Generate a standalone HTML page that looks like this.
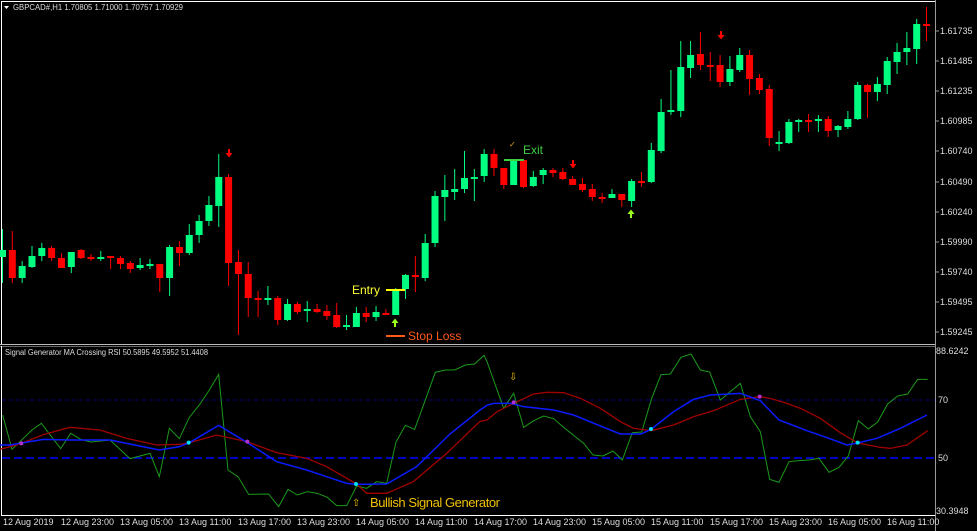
<!DOCTYPE html>
<html><head><meta charset="utf-8"><style>
html,body{margin:0;padding:0;background:#000;width:977px;height:531px;overflow:hidden}
svg{display:block}
text{font-family:"Liberation Sans",sans-serif}
</style></head><body>
<svg id="s" width="977" height="531" viewBox="0 0 977 531" xmlns="http://www.w3.org/2000/svg">
<rect width="977" height="531" fill="#000"/>
<line x1="1" y1="1.5" x2="935" y2="1.5" stroke="#fff" stroke-width="1"/>
<line x1="1.5" y1="1" x2="1.5" y2="344" stroke="#fff" stroke-width="1"/>
<line x1="935.5" y1="0" x2="935.5" y2="531" stroke="#9a9a9a" stroke-width="1"/>
<line x1="0" y1="344.5" x2="935" y2="344.5" stroke="#bbb" stroke-width="1"/>
<line x1="0" y1="346.5" x2="935" y2="346.5" stroke="#666" stroke-width="1"/>
<line x1="1.5" y1="346" x2="1.5" y2="515" stroke="#fff" stroke-width="1"/>
<line x1="1" y1="515.5" x2="935" y2="515.5" stroke="#fff" stroke-width="1"/>
<g id="cd"></g>
<g id="ind"></g>
<path d="M4 6 L9 6 L6.5 9 Z" fill="#fff"/>
<text x="13" y="10" font-size="8" fill="#ddd" textLength="170" lengthAdjust="spacingAndGlyphs">GBPCAD#,H1  1.70805 1.71000 1.70757 1.70929</text>
<g font-size="9" fill="#ddd">
<text x="940" y="34">1.61735</text>
<text x="940" y="64">1.61485</text>
<text x="940" y="94">1.61235</text>
<text x="940" y="124">1.60985</text>
<text x="940" y="154">1.60740</text>
<text x="940" y="185">1.60490</text>
<text x="940" y="215">1.60240</text>
<text x="940" y="245">1.59990</text>
<text x="940" y="275">1.59740</text>
<text x="940" y="305">1.59495</text>
<text x="940" y="335">1.59245</text>
<text x="936" y="354">88.6242</text>
<text x="938" y="403">70</text>
<text x="938" y="461">50</text>
<text x="936" y="514">30.3948</text>
</g>
<g stroke="#9a9a9a">
<line x1="935" y1="31" x2="939" y2="31"/><line x1="935" y1="61" x2="939" y2="61"/><line x1="935" y1="91" x2="939" y2="91"/><line x1="935" y1="121" x2="939" y2="121"/><line x1="935" y1="151" x2="939" y2="151"/><line x1="935" y1="182" x2="939" y2="182"/><line x1="935" y1="212" x2="939" y2="212"/><line x1="935" y1="242" x2="939" y2="242"/><line x1="935" y1="272" x2="939" y2="272"/><line x1="935" y1="302" x2="939" y2="302"/><line x1="935" y1="332" x2="939" y2="332"/>
</g>
<line x1="386" y1="290" x2="405" y2="290" stroke="#ffff00" stroke-width="2"/>
<text x="352" y="294" font-size="12" fill="#ffff33">Entry</text>
<line x1="386" y1="336" x2="405" y2="336" stroke="#ff5a1a" stroke-width="2"/>
<text x="408" y="340" font-size="12" fill="#ff5a1a">Stop Loss</text>
<line x1="504" y1="160" x2="524" y2="160" stroke="#3fcf3f" stroke-width="2"/>
<text x="523" y="154" font-size="12" fill="#3fcf3f">Exit</text>
<text x="509" y="147" font-size="8" fill="#e0a020">✓</text>
<text x="5" y="355" font-size="8" fill="#ddd" textLength="203" lengthAdjust="spacingAndGlyphs">Signal Generator MA Crossing RSI 50.5895 49.5952 51.4408</text>
<text x="370" y="507" font-size="13" fill="#f0c000" textLength="130">Bullish Signal Generator</text>
<text x="352" y="506" font-size="10" fill="#f0c000">⇧</text>
<text x="509" y="380" font-size="10" fill="#f0c000">⇩</text>
<g font-size="9" fill="#ddd">
<text x="3" y="525">12 Aug 2019</text>
<text x="61" y="525">12 Aug 23:00</text>
<text x="120" y="525">13 Aug 05:00</text>
<text x="179" y="525">13 Aug 11:00</text>
<text x="238" y="525">13 Aug 17:00</text>
<text x="297" y="525">13 Aug 23:00</text>
<text x="356" y="525">14 Aug 05:00</text>
<text x="415" y="525">14 Aug 11:00</text>
<text x="474" y="525">14 Aug 17:00</text>
<text x="533" y="525">14 Aug 23:00</text>
<text x="592" y="525">15 Aug 05:00</text>
<text x="651" y="525">15 Aug 11:00</text>
<text x="710" y="525">15 Aug 17:00</text>
<text x="769" y="525">15 Aug 23:00</text>
<text x="828" y="525">16 Aug 05:00</text>
<text x="887" y="525">16 Aug 11:00</text>
</g>
</svg>
<script>
var NS="http://www.w3.org/2000/svg";
function el(p,t,a){var e=document.createElementNS(NS,t);for(var k in a)e.setAttribute(k,a[k]);p.appendChild(e);return e;}
var G="#00ff80",R="#ff0000";
var C=[
[G,250,257,229,283],[R,250,278,231,283],[G,266,278,261,283],[G,256,267,246,268],[G,248,256,243,261],
[R,248,258,246,261],[R,258,268,253,268],[G,252,267,252,273],[R,250,258,249,259],[R,257,259,254,261],
[G,257,259,251,261],[R,256,258,256,269],[R,258,264,256,269],[R,263,269,261,273],[G,265,268,258,270],
[G,264,266,259,269],[R,264,278,264,292],[G,247,278,245,296],[R,247,253,241,266],[G,235,253,224,255],
[G,221,235,215,243],[G,205,221,196,226],[G,177,206,154,227],[R,177,263,174,286],[R,262,274,250,335],
[R,274,298,262,317],[R,298,300,291,317],[G,298,300,286,305],[R,298,320,296,325],[G,304,320,299,321],
[R,304,312,302,314],[G,309,311,301,322],[R,309,312,304,313],[R,311,316,305,320],[R,315,327,303,328],
[G,325,327,315,330],[G,313,327,307,327],[R,313,317,307,322],[G,312,317,306,321],[R,313,315,309,315],
[G,290,315,288,315],[G,275,289,274,299],[R,275,277,256,292],[G,243,278,234,281],[G,196,243,191,247],
[G,190,197,175,221],[G,189,192,169,200],[G,178,189,151,193],[G,177,178,169,201],[G,154,176,149,182],
[R,154,168,149,176],[R,168,185,168,189],[G,160,185,160,185],[R,160,187,160,188],[G,177,186,171,187],
[G,170,175,168,184],[R,170,173,168,177],[R,172,179,168,180],[R,179,185,176,185],[R,184,190,178,192],
[R,189,197,184,201],[R,197,199,193,203],[G,194,198,189,198],[R,194,200,194,207],[G,181,201,179,207],
[R,181,182,172,187],[G,150,182,143,183],[G,112,151,99,153],[G,110,112,70,115],[G,67,111,41,117],
[G,55,68,41,78],[R,54,65,32,70],[R,65,66,52,81],[R,65,82,55,87],[G,69,82,56,86],
[G,55,70,48,72],[R,55,79,50,95],[R,78,90,74,94],[R,89,138,85,146],[G,142,144,131,151],
[G,122,143,119,144],[G,120,122,119,132],[R,120,121,114,132],[G,119,121,115,132],[R,119,131,116,137],
[G,126,130,125,137],[G,119,127,111,129],[G,85,119,82,120],[R,85,92,84,118],[G,84,92,77,101],
[G,61,85,57,94],[G,52,62,43,74],[G,48,52,32,65],[G,24,49,19,64],[R,24,25,7,41]
];
var cd=document.getElementById("cd");
C.forEach(function(c,k){var x=2.5+9.83*k;
 el(cd,"line",{x1:x,y1:c[3],x2:x,y2:c[4],stroke:c[0],"stroke-width":1});
 var h=Math.max(c[2]-c[1],2);
 el(cd,"rect",{x:x-3.5,y:c[1],width:7,height:h,fill:c[0]});
});
function arrowDown(x,y,col){el(cd,"path",{d:"M"+(x-1)+" "+y+"h2v4h2.5l-3.5 4.5l-3.5 -4.5h2.5z",fill:col});}
function arrowUp(x,y,col){el(cd,"path",{d:"M"+(x-1)+" "+(y+9)+"h2v-4h2.5l-3.5 -4.5l-3.5 4.5h2.5z",fill:col});}
arrowDown(229,149,R);arrowDown(573,160,R);arrowDown(721,31,R);
arrowUp(395,318,"#9aff1a");arrowUp(631,209,"#9aff1a");
var ind=document.getElementById("ind");
el(ind,"line",{x1:2,y1:400,x2:935,y2:400,stroke:"#00007a","stroke-width":1,"stroke-dasharray":"4,3"});
el(ind,"line",{x1:2,y1:458,x2:935,y2:458,stroke:"#0000ff","stroke-width":1.5,"stroke-dasharray":"8,4"});
function pts(a,b){var s=[];a.forEach(function(p){s.push((p[0]/3)+","+(340+p[1]/3));});b.forEach(function(p){s.push((487+p[0]/3)+","+(340+p[1]/3));});return s.join(" ");}
var g1=[[8,225],[36,328],[96,270],[124,250],[182,326],[212,280],[242,298],[272,306],[330,300],[390,356],[450,340],[478,410],[508,265],[538,296],[568,232],[598,195],[628,150],[656,103],[684,390],[714,410],[746,463],[806,462],[836,500],[864,448],[892,465],[922,455],[952,460],[982,472],[1010,497],[1040,497],[1070,438],[1100,445],[1130,425],[1160,430],[1188,306],[1216,256],[1244,268],[1306,97],[1336,90],[1364,90],[1396,75],[1424,72],[1452,46]];
var g2=[[0,65],[50,205],[80,160],[110,262],[140,242],[170,228],[200,236],[230,262],[290,310],[318,345],[348,348],[378,333],[406,360],[436,278],[464,276],[494,175],[522,104],[550,102],[582,52],[612,42],[640,90],[668,96],[700,180],[730,155],[760,130],[790,230],[820,275],[848,418],[876,427],[906,365],[936,362],[966,360],[996,355],[1026,397],[1056,382],[1084,348],[1114,242],[1144,267],[1172,246],[1202,192],[1232,168],[1262,162],[1292,118],[1322,118]];
var b1=[[0,315],[30,315],[130,298],[210,300],[330,300],[478,330],[538,320],[568,308],[656,256],[742,308],[830,365],[920,390],[980,410],[1040,430],[1070,433],[1160,432],[1250,380],[1350,282],[1440,210]];
var b2=[[0,196],[20,190],[70,190],[110,200],[200,210],[260,225],[350,262],[400,282],[462,282],[492,268],[560,215],[620,178],[670,165],[760,160],[820,182],[876,240],[960,272],[1020,293],[1080,315],[1112,309],[1170,295],[1240,265],[1320,225]];
var r1=[[0,328],[60,312],[130,284],[210,262],[300,270],[380,295],[470,315],[540,313],[580,305],[650,285],[740,305],[830,338],[920,355],[980,380],[1070,432],[1100,460],[1160,460],[1240,425],[1340,340],[1440,244]];
var r2=[[0,240],[30,215],[80,190],[140,162],[180,157],[230,158],[280,175],[340,205],[400,245],[440,265],[492,272],[560,255],[620,230],[680,212],[760,178],[820,170],[850,175],[900,190],[940,205],[1000,235],[1060,278],[1112,309],[1180,322],[1210,325],[1260,315],[1322,272]];
el(ind,"polyline",{points:pts(g1,g2),fill:"none",stroke:"#1a9a1a","stroke-width":1});
el(ind,"polyline",{points:pts(r1,r2),fill:"none",stroke:"#a00000","stroke-width":1.3});
el(ind,"polyline",{points:pts(b1,b2),fill:"none",stroke:"#0a1cff","stroke-width":1.5});
[[64/3,340+310/3,"#b030d0"],[742/3,340+305/3,"#b030d0"],[566/3,340+308/3,"#00e0f0"],[1068/3,340+432/3,"#00e0f0"],
 [487+80/3,340+187/3,"#b030d0"],[487+818/3,340+170/3,"#b030d0"],[487+492/3,340+267/3,"#00e0f0"],[487+1112/3,340+308/3,"#00e0f0"]].forEach(function(d){
 el(ind,"circle",{cx:d[0],cy:d[1],r:2,fill:d[2]});});
</script>
</body></html>
